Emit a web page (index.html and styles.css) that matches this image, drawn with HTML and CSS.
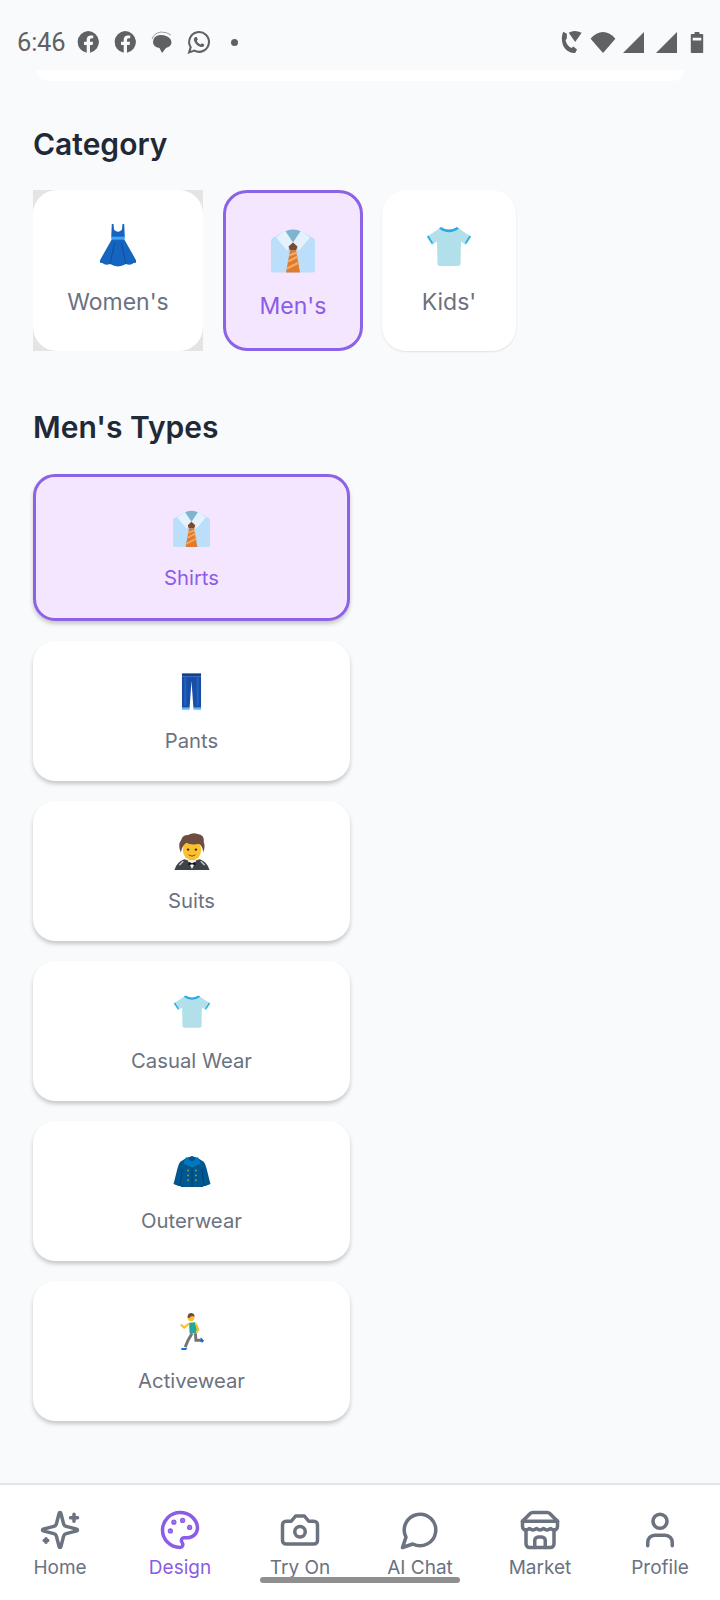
FILE: index.html
```html
<!DOCTYPE html>
<html lang="en">
<head>
<meta charset="utf-8">
<title>Design</title>
<link rel="stylesheet" href="styles.css">
</head>
<body>
<svg class="sprite" xmlns="http://www.w3.org/2000/svg">
  <symbol id="e-shirt" viewBox="0 0 44 44">
    <path d="M1 10 13 3Q22-1 31 3L43 10Q44 11 44 13V42Q44 44 42 44H2Q0 44 0 42V13Q0 11 1 10Z" fill="#bbdefb"/>
    <path d="M14 3Q22-1 30 3L22 15Z" fill="#7fb3d0"/>
    <path d="M14 2 22 14 16 22 5 9Z" fill="#e3f2fd"/>
    <path d="M30 2 22 14 28 22 39 9Z" fill="#e3f2fd"/>
    <path d="M22 14 26.500 18 25 22H19L17.500 18Z" fill="#7c4a2d"/>
    <path d="M19 22H25L29 44H15Z" fill="#e07b2e"/>
    <path d="M18 27 26 24M17 33 27 28M16 40 28 34" stroke="#f4ab68" stroke-width="2" fill="none"/>
  </symbol>
  <symbol id="e-dress" viewBox="2 0 32 46" preserveAspectRatio="none">
    <path d="M12.500 1h1.500l.5 6q3.500 4 7 0l.5-6h1.500l.5 12-.5 3H12.500l-.5-3Z" fill="#1565c0"/>
    <rect x="12" y="14" width="12" height="2.500" fill="#42a5f5"/>
    <path d="M12.500 16.500H23.500L34 38Q35 41 32 41 29 44 25 42 18 47 11 42 7 44 4 41 1 41 2 38Z" fill="#1565c0"/>
    <path d="M15 20 11 42M21 20 25 42" stroke="#0d47a1" stroke-width=".8" fill="none"/>
  </symbol>
  <symbol id="e-tee" viewBox="0 0 46 40">
    <path d="M14 1 2 9Q1 10 1.500 11L6 18 11 14.500 11.500 37Q11.500 39 14 39H32Q34.500 39 34.500 37L35 14.500 40 18 44.500 11Q45 10 44 9L32 1Q23 6 14 1Z" fill="#b2e0ea"/>
    <path d="M15 0Q23 5 31 0L33 1.500Q23 9 13 1.500Z" fill="#29a9e8"/>
    <path d="M1 9.500 6 17 7 15.800 2.500 8.500ZM45 9.500 40 17 39 15.800 43.500 8.500Z" fill="#29a9e8"/>
  </symbol>
  <symbol id="e-jeans" viewBox="0 0 22 38">
    <rect x="1" y="0" width="20" height="3" fill="#123f8f"/>
    <path d="M1 3H21L21 36H13L11 8 9 36H1Z" fill="#174ea6"/>
    <path d="M4.500 4V34M17.500 4V34" stroke="#2463c0" stroke-width="2" fill="none"/>
    <path d="M1 36H9V38H1ZM13 36H21V38H13Z" fill="#64b5f6"/>
  </symbol>
  <symbol id="e-tux" viewBox="0 0 36 38">
    <path d="M0 38Q2 30 10 27L18 29 26 27Q34 30 36 38Z" fill="#3f4246"/>
    <path d="M13 27 18 37 23 27 18 29Z" fill="#f5f5f5"/>
    <path d="M14.500 29.500 18 31 21.500 29.500V33.500L18 32 14.500 33.500Z" fill="#111"/>
    <path d="M5 33 9 29M31 33 27 29" stroke="#bdbdbd" stroke-width="1.500" fill="none"/>
    <ellipse cx="18" cy="17" rx="9.500" ry="11" fill="#fbc02d"/>
    <path d="M6.500 20Q3 12 7 7 8 2 14 2 19-1 24 1 31 2 30 9 32 14 29.500 20 29 13 25 11 18 13 12 10 8 13 6.500 20Z" fill="#6d4c41"/>
    <circle cx="14" cy="17" r="1.200" fill="#3e2723"/><circle cx="22" cy="17" r="1.200" fill="#3e2723"/>
    <path d="M14.500 22.500Q18 25 21.500 22.500" stroke="#6d4c41" stroke-width="1" fill="none"/>
  </symbol>
  <symbol id="e-coat" viewBox="0 0 38 34">
    <path d="M13 3 19 1 25 3 31 7Q33 9 34 14L38 30 33 32H30.500L31 33H7L7.500 32H5L0 30 4 14Q5 9 7 7Z" fill="#01578f"/>
    <path d="M13 2 19 7 25 2 28 9 19 13 10 9Z" fill="#0277bd"/>
    <path d="M9 14 6.500 31M29 14 31.500 31" stroke="#013f73" stroke-width="1" fill="none"/>
    <g fill="#8d9a4f"><circle cx="15" cy="16" r="1"/><circle cx="23" cy="16" r="1"/><circle cx="15" cy="21" r="1"/><circle cx="23" cy="21" r="1"/><circle cx="15" cy="26" r="1"/><circle cx="23" cy="26" r="1"/></g>
    <path d="M19 13V33" stroke="#013f73" stroke-width="1"/>
  </symbol>
  <symbol id="e-run" viewBox="0 0 26 38">
    <circle cx="12" cy="5" r="3.500" fill="#fbc02d"/>
    <path d="M8.500 5Q8 0 12.500 0 16 .5 15.500 4 12 2 11 5Z" fill="#6d4c41"/>
    <path d="M10 10 16 9.500Q19 14 17.500 21H10.500Z" fill="#26a69a"/>
    <path d="M10 11 5 15 1.500 12" stroke="#fbc02d" stroke-width="2.200" fill="none"/>
    <path d="M17 11 19.500 17 17.500 20" stroke="#fbc02d" stroke-width="2.200" fill="none"/>
    <path d="M13 21 9 28 6 35M16.500 21 17 28 23 28" stroke="#757575" stroke-width="3" fill="none"/>
    <path d="M2 36H8L7 38H2ZM22 25 25.500 28.500 23.500 30.500 21.500 29Z" fill="#1e6fd0"/>
  </symbol>
  <symbol id="s-fb" viewBox="0 0 22 22">
    <path fill-rule="evenodd" d="M11 0a11 11 0 0 1 2 21.800V14h2.600l.5-3.200H13V9c0-1 .5-1.700 1.800-1.700h1.400V4.600C15.500 4.500 14.600 4.400 13.800 4.400 11.300 4.400 9.700 5.900 9.700 8.600v2.200H7V14h2.700v7.800A11 11 0 0 1 11 0Z"/>
  </symbol>
  <symbol id="s-msg" viewBox="0 0 22 22">
    <path d="M2 11Q2 5 9 4 17 4 20 9 22 15 15 17L11 22 8.500 17Q2 16 2 11Z"/>
    <path d="M1 8Q3 2 10 1 16 1 20 4" stroke="currentColor" stroke-width="1" fill="none" opacity=".6"/>
  </symbol>
  <symbol id="s-wa" viewBox="0 0 24 24">
    <path d="M3 21.500 4.500 16.500A9.500 9.500 0 1 1 8 19.800Z" fill="none" stroke="currentColor" stroke-width="2"/>
    <path d="M8.800 6.800 10.300 6.700 11.300 9.200 10.300 10.500Q11.500 13 14 14L15.300 12.800 17.500 14 17.300 15.400Q16 17 13.500 16 9 14.500 7.500 9.500 7.500 8 8.800 6.800Z"/>
  </symbol>
  <symbol id="s-call" viewBox="0 0 22 26">
    <path d="M2 2 6 4V9L4.500 11Q6 17 11 19.500L13 18 17 21 15 25Q6 25 2 17-1 9 2 2Z"/>
    <path d="M8 3Q14-1 22 3L15 13Z"/>
  </symbol>
  <symbol id="s-wifi" viewBox="0 0 26 22">
    <path d="M13 22 0 7Q6 0 13 0T26 7Z"/>
  </symbol>
  <symbol id="s-signal" viewBox="0 0 22 22">
    <path d="M22 0V22H0Z"/>
  </symbol>
  <symbol id="s-batt" viewBox="0 0 13 22">
    <path fill-rule="evenodd" d="M4 0H9V2H12Q13 2 13 3V21Q13 22 12 22H1Q0 22 0 21V3Q0 2 1 2H4ZM2 6V9H11V6Z"/>
  </symbol>
  <symbol id="n-home" viewBox="0 0 24 24">
    <path d="M9.937 15.500A2 2 0 0 0 8.500 14.063l-6.135-1.582a.5.5 0 0 1 0-.962L8.500 9.936A2 2 0 0 0 9.937 8.500l1.582-6.135a.5.5 0 0 1 .963 0L14.063 8.500A2 2 0 0 0 15.500 9.937l6.135 1.581a.5.5 0 0 1 0 .964L15.500 14.063a2 2 0 0 0-1.437 1.437l-1.582 6.135a.5.5 0 0 1-.963 0z"/>
    <path d="M20 3v4M22 5h-4M4 17v2M5 18H3"/>
  </symbol>
  <symbol id="n-design" viewBox="0 0 24 24">
    <circle cx="13.500" cy="6.500" r=".5" fill="currentColor"/><circle cx="17.500" cy="10.500" r=".5" fill="currentColor"/><circle cx="8.500" cy="7.500" r=".5" fill="currentColor"/><circle cx="6.500" cy="12.500" r=".5" fill="currentColor"/>
    <path d="M12 2C6.500 2 2 6.500 2 12s4.500 10 10 10c.926 0 1.648-.746 1.648-1.688 0-.437-.18-.835-.437-1.125-.29-.289-.438-.652-.438-1.125a1.640 1.640 0 0 1 1.668-1.668h1.996c3.051 0 5.555-2.503 5.555-5.554C21.965 6.012 17.461 2 12 2z"/>
  </symbol>
  <symbol id="n-camera" viewBox="0 0 24 24">
    <path d="M14.500 4h-5L7 7H4a2 2 0 0 0-2 2v9a2 2 0 0 0 2 2h16a2 2 0 0 0 2-2V9a2 2 0 0 0-2-2h-3l-2.500-3z"/>
    <circle cx="12" cy="13" r="3"/>
  </symbol>
  <symbol id="n-chat" viewBox="0 0 24 24">
    <path d="M7.900 20A9 9 0 1 0 4 16.100L2 22Z"/>
  </symbol>
  <symbol id="n-store" viewBox="0 0 24 24">
    <path d="m2 7 4.410-4.410A2 2 0 0 1 7.830 2h8.340a2 2 0 0 1 1.420.59L22 7"/>
    <path d="M4 12v8a2 2 0 0 0 2 2h12a2 2 0 0 0 2-2v-8"/>
    <path d="M15 22v-4a2 2 0 0 0-2-2h-2a2 2 0 0 0-2 2v4"/>
    <path d="M2 7h20"/>
    <path d="M22 7v3a2 2 0 0 1-2 2a2.700 2.700 0 0 1-1.590-.63.700.700 0 0 0-.82 0A2.700 2.700 0 0 1 16 12a2.700 2.700 0 0 1-1.590-.63.700.700 0 0 0-.82 0A2.700 2.700 0 0 1 12 12a2.700 2.700 0 0 1-1.590-.63.700.700 0 0 0-.82 0A2.700 2.700 0 0 1 8 12a2.700 2.700 0 0 1-1.590-.63.700.700 0 0 0-.82 0A2.700 2.700 0 0 1 4 12a2 2 0 0 1-2-2V7"/>
  </symbol>
  <symbol id="n-user" viewBox="0 0 24 24">
    <circle cx="12" cy="7" r="4"/>
    <path d="M19 21v-2a4 4 0 0 0-4-4H9a4 4 0 0 0-4 4v2"/>
  </symbol>
</svg>

<div class="app">
  <header class="status">
    <span class="time">6:46</span>
    <svg class="si si-fb"><use href="#s-fb"/></svg>
    <svg class="si si-fb"><use href="#s-fb"/></svg>
    <svg class="si si-msg"><use href="#s-msg"/></svg>
    <svg class="si si-wa"><use href="#s-wa"/></svg>
    <span class="dot"></span>
    <span class="status-right">
      <svg class="si si-call"><use href="#s-call"/></svg>
      <svg class="si si-wifi"><use href="#s-wifi"/></svg>
      <svg class="si si-signal"><use href="#s-signal"/></svg>
      <svg class="si si-signal"><use href="#s-signal"/></svg>
      <svg class="si si-batt"><use href="#s-batt"/></svg>
    </span>
  </header>
  <div class="strip"></div>

  <main class="main">
    <h2 class="title title-first">Category</h2>
    <div class="cats">
      <div class="frame">
        <div class="cat cat-women">
          <svg class="cat-ico ico-dress"><use href="#e-dress"/></svg>
          <span class="cat-label">Women's</span>
        </div>
      </div>
      <div class="cat cat-men is-on">
        <svg class="cat-ico ico-shirt"><use href="#e-shirt"/></svg>
        <span class="cat-label">Men's</span>
      </div>
      <div class="cat cat-kids">
        <svg class="cat-ico ico-tee"><use href="#e-tee"/></svg>
        <span class="cat-label">Kids'</span>
      </div>
    </div>

    <h2 class="title title-second">Men's Types</h2>
    <div class="types">
      <div class="type is-on">
        <span class="type-ico"><svg class="t-shirt"><use href="#e-shirt"/></svg></span>
        <span class="type-label">Shirts</span>
      </div>
      <div class="type">
        <span class="type-ico"><svg class="t-jeans"><use href="#e-jeans"/></svg></span>
        <span class="type-label">Pants</span>
      </div>
      <div class="type">
        <span class="type-ico"><svg class="t-tux"><use href="#e-tux"/></svg></span>
        <span class="type-label">Suits</span>
      </div>
      <div class="type">
        <span class="type-ico"><svg class="t-tee"><use href="#e-tee"/></svg></span>
        <span class="type-label">Casual Wear</span>
      </div>
      <div class="type">
        <span class="type-ico"><svg class="t-coat"><use href="#e-coat"/></svg></span>
        <span class="type-label">Outerwear</span>
      </div>
      <div class="type">
        <span class="type-ico"><svg class="t-run"><use href="#e-run"/></svg></span>
        <span class="type-label">Activewear</span>
      </div>
    </div>
  </main>

  <nav class="nav">
    <div class="nav-item"><svg class="nav-ico"><use href="#n-home"/></svg><span>Home</span></div>
    <div class="nav-item is-active"><svg class="nav-ico"><use href="#n-design"/></svg><span>Design</span></div>
    <div class="nav-item"><svg class="nav-ico"><use href="#n-camera"/></svg><span>Try On</span></div>
    <div class="nav-item"><svg class="nav-ico"><use href="#n-chat"/></svg><span>AI Chat</span></div>
    <div class="nav-item"><svg class="nav-ico"><use href="#n-store"/></svg><span>Market</span></div>
    <div class="nav-item"><svg class="nav-ico"><use href="#n-user"/></svg><span>Profile</span></div>
    <div class="home-bar"></div>
  </nav>
</div>
</body>
</html>
```

FILE: styles.css
```css
* { box-sizing: border-box; }
html, body { margin: 0; padding: 0; }
body { width: 720px; height: 1600px; overflow: hidden; background: #f9fafb; font-family: Inter, "Noto Sans", sans-serif; }
.sprite { display: none; }
.app { display: flex; flex-direction: column; height: 1600px; }

/* status bar */
.status { display: flex; align-items: center; height: 70px; padding: 14px 16px 0 17px; color: #5f6163; flex: none; }
.time { font-family: Roboto, sans-serif; font-size: 25.500px; width: 60px; letter-spacing: -.2px; }
.si { fill: currentColor; flex: none; display: block; }
.si-fb { width: 22px; height: 22px; margin-right: 15px; }
.si-msg { width: 22px; height: 22px; margin-right: 13px; }
.si-wa { width: 25px; height: 25px; }
.dot { width: 7px; height: 7px; border-radius: 50%; background: currentColor; margin-left: 20px; }
.status-right { margin-left: auto; display: flex; align-items: center; }
.si-call { width: 21px; height: 24px; margin-right: 8px; }
.si-wifi { width: 26px; height: 21px; margin-right: 7px; }
.si-signal { width: 21px; height: 21px; margin-right: 12px; }
.si-batt { width: 14px; height: 21px; margin-left: 1px; }

.strip { height: 11px; margin: 0 36px 0 37px; background: #fff; border-radius: 0 0 14px 14px; flex: none; }

/* main */
.main { flex: 1; padding: 0 33px; overflow: hidden; }
.title { margin: 0; font-size: 30px; line-height: 36px; font-weight: 600; color: #1f2937; }
.title-first { margin-top: 45px; }
.title-second { margin-top: 58px; }

.cats { display: flex; gap: 20px; margin-top: 28px; align-items: stretch; }
.frame { width: 170px; height: 161px; background: #e4e4e4; }
.cat { height: 161px; display: flex; flex-direction: column; align-items: center; background: #fff; border-radius: 24px; color: #6b7280; }
.cat-women { width: 170px; padding-top: 33px; }
.cat-men { width: 140px; }
.cat-kids { width: 134px; padding-top: 37px; box-shadow: 0 1px 2px rgba(0, 0, 0, .1); margin-left: -1px; }
.cat.is-on { background: #f5e6ff; border: 3px solid #8b63e6; color: #8b5ce6; padding-top: 35px; }
.cat-ico { display: block; width: 44px; height: 45px; }
.ico-dress { width: 36px; }
.ico-tee { width: 46px; height: 40px; margin-bottom: 1px; }
.cat-label { margin-top: 20px; font-size: 23px; line-height: 28px; }
.cat-men .cat-label { margin-top: 19px; }

.types { display: flex; flex-direction: column; gap: 20px; margin-top: 29px; width: 317px; }
.type { height: 140px; padding-top: 32px; display: flex; flex-direction: column; align-items: center; background: #fff; border-radius: 22px; color: #6b7280; box-shadow: 0 3px 4px rgba(0, 0, 0, .2); }
.type.is-on { height: 147px; padding-top: 33px; background: #f5e6ff; border: 3px solid #8b63e6; color: #8b5ce6; }
.type-ico { display: flex; align-items: center; justify-content: center; height: 37px; }
.type-ico svg { display: block; }
.t-shirt { width: 37px; height: 37px; }
.t-jeans { width: 21px; height: 37px; }
.t-tux { width: 36px; height: 37px; }
.t-tee { width: 38px; height: 34px; }
.t-coat { width: 38px; height: 33px; }
.t-run { width: 26px; height: 37px; }
.type-label { margin-top: 20px; font-size: 20.300px; line-height: 22px; }

/* bottom nav */
.nav { flex: none; position: relative; height: 117px; background: #fff; border-top: 2px solid #e3e4e7; display: grid; grid-template-columns: repeat(6, 120px); padding-top: 24px; }
.nav-item { display: flex; flex-direction: column; align-items: center; color: #6b7280; font-size: 19px; line-height: 22px; }
.nav-item span { margin-top: 6px; }
.nav-item.is-active { color: #8b5ce6; }
.nav-ico { width: 42px; height: 42px; display: block; fill: none; stroke: currentColor; stroke-width: 2; stroke-linecap: round; stroke-linejoin: round; }
.home-bar { position: absolute; left: 260px; top: 92px; width: 200px; height: 6px; border-radius: 3px; background: #8f8f8f; }
```
